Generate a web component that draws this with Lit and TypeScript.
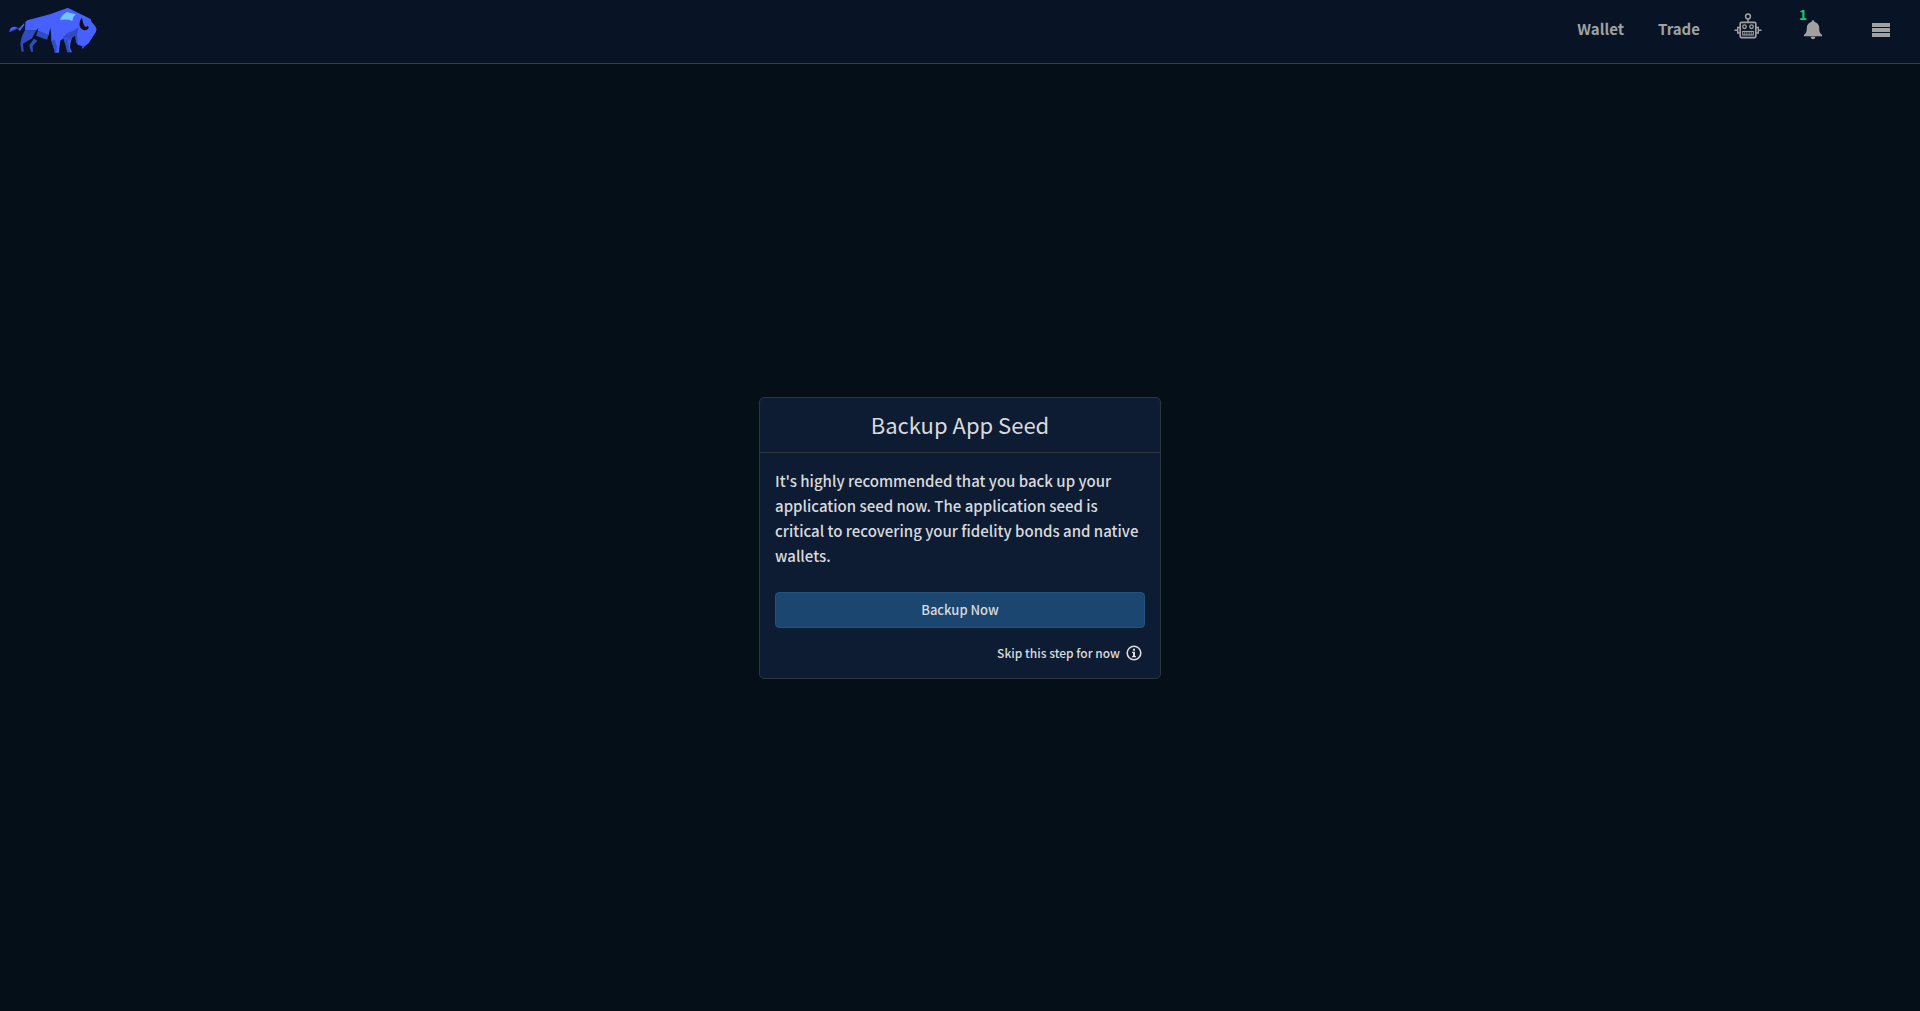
import { LitElement, html, css } from "lit";
import { customElement, property } from "lit/decorators.js";

@customElement("app-header")
export class AppHeader extends LitElement {
  @property({ type: Number }) notes = 1;

  static styles = css`
    :host {
      display: block;
    }
    .bar {
      display: flex;
      align-items: center;
      justify-content: space-between;
      height: 63px;
      border-bottom: 1px solid #393b46;
      background: #081426;
      color: #a1a1a1;
    }
    .logo {
      display: block;
      height: 63px;
    }
    .logo svg {
      display: block;
    }
    nav {
      display: flex;
      align-items: center;
      height: 63px;
      padding-right: 30px;
      padding-bottom: 4px;
      box-sizing: border-box;
    }
    .link {
      color: inherit;
      text-decoration: none;
      font-size: 15px;
      font-weight: 700;
      line-height: 24px;
      padding-bottom: 2px;
      margin-right: 34px;
    }
    .icon {
      position: relative;
      display: block;
      padding: 0;
      border: 0;
      background: none;
      color: inherit;
      font: inherit;
      cursor: pointer;
    }
    .icon svg {
      display: block;
    }
    .robot {
      margin-right: 41px;
      padding-bottom: 8px;
    }
    .bell {
      margin-right: 49px;
    }
    .count {
      position: absolute;
      left: -4px;
      top: -14px;
      color: #1ec471;
      font-size: 14px;
      font-weight: 700;
      line-height: 16px;
    }
  `;

  render() {
    return html`
      <header class="bar">
        <a class="logo" href="#home" aria-label="Home">
          <svg width="110" height="63" viewBox="0 0 330 189" aria-hidden="true">
            <path fill="#4661ff" d="M75 91L76 66L82 61L150 43L196 26Q203 22 211 27L272 57L275 66L286 79Q292 87 288 95L266 130L254 139L248 146L245 138L235 135L228 127L226 106L216 113L211 130L210 143L216 157L202 157L197 135L190 115L181 122L178 145L177 158L165 158L161 143L154 122L153 98L151 83L146 106L113 92L115 84L109 91Z"/>
            <path fill="#4661ff" d="M28 96Q29 80 45 80Q52 81 56 86L72 70L73 75L60 93L51 85Z"/>
            <path fill="#334bc0" d="M28 97Q34 87 52 85L43 91ZM75 90L109 91L96 115L69 131L71 155H65L61 131L66 108ZM114 92L146 104L141 119L108 107ZM102 116L112 122L98 138L99 155H93L88 136ZM154 122L164 119L171 140L169 157H165L161 143ZM190 115L204 118L207 145L211 156H202L197 135Z"/>
            <path fill="#334bc0" d="M189 114Q195 99 219 93L237 81L231 105L234 135L228 127L226 105L215 113L208 123L203 115Z"/>
            <path fill="#73c4ff" d="M200 36L227 43L220 51L217 63Q203 56 180 60Q184 45 200 36Z"/>
            <path fill="#140d18" d="M246 53Q237 63 239 78Q242 88 254 91Q266 90 266 80L262 77L258 82Q249 75 246 53Z"/>
            <path fill="#334bc0" d="M254 137L248 147L245 137Z"/>
          </svg>
        </a>
        <nav>
          <a class="link" href="#wallets">Wallet</a>
          <a class="link" href="#trade">Trade</a>
          <button class="icon robot" aria-label="Market making">
            <svg width="28" height="26" viewBox="0 0 28 26" fill="none" stroke="currentColor" aria-hidden="true">
              <circle cx="14" cy="3.5" r="2.4" stroke-width="1.5"/>
              <path d="M14 6V9.300" stroke-width="1.500"/>
              <rect x="6.200" y="9.300" width="15.600" height="15.400" rx="1.500" stroke-width="1.700"/>
              <path d="M6 14.500H3.700V20H6M22 14.500h2.300V20H22M3.500 17.200H.5M24.500 17.200h3" stroke-width="1.400"/>
              <circle cx="10.500" cy="13.700" r="1.800" stroke-width="1.300"/>
              <circle cx="17.500" cy="13.700" r="1.800" stroke-width="1.300"/>
              <rect x="8.700" y="18.400" width="10.600" height="3.600" stroke-width="1.100"/>
              <path d="M10.800 18v4M12.900 18v4M15.100 18v4M17.200 18v4" stroke-width=".9"/>
            </svg>
          </button>
          <button class="icon bell" aria-label="Notifications">
            <svg width="20" height="20" viewBox="0 0 20 20" fill="currentColor" aria-hidden="true">
              <path d="M10 .3c.9 0 1.300.6 1.400 1.500 3 .8 4.800 3.200 4.800 6.200 0 3.900.8 5.200 2.900 7v1.300H.9V15c2.100-1.800 2.900-3.100 2.900-7 0-3 1.800-5.400 4.800-6.200C8.700.9 9.100.3 10 .3ZM7.600 16.800h4.800a2.400 2.400 0 0 1-4.800 0Z"/>
            </svg>
            <span class="count">${this.notes}</span>
          </button>
          <button class="icon" aria-label="Menu">
            <svg width="18" height="14" viewBox="0 0 18 14" fill="currentColor" aria-hidden="true">
              <path d="M0 0h18v4H0zM0 5h18v4H0zM0 10h18v4H0z"/>
            </svg>
          </button>
        </nav>
      </header>
    `;
  }
}

@customElement("backup-card")
export class BackupCard extends LitElement {
  static styles = css`
    :host {
      display: block;
      width: 402px;
      max-width: 100%;
    }
    .card {
      border: 1px solid #2e3540;
      border-radius: 5px;
      background: #0e1c33;
      color: #d8dadd;
    }
    h1 {
      margin: 0;
      padding: 9px 15px 11px;
      border-bottom: 1px solid #2e3540;
      font-size: 22px;
      font-weight: 400;
      line-height: 34px;
      text-align: center;
    }
    .body {
      padding: 15px;
    }
    p {
      margin: 0 0 24px;
      font-size: 15px;
      font-weight: 500;
      line-height: 25px;
    }
    button {
      cursor: pointer;
      font-family: inherit;
      font-size: 13px;
      font-weight: 500;
      line-height: 20px;
      color: inherit;
    }
    .primary {
      display: block;
      width: 100%;
      padding: 7px;
      border: 1px solid #23527e;
      border-radius: 4px;
      background: #1a466f;
    }
    .skip {
      display: flex;
      align-items: center;
      gap: 6px;
      margin: 15px 3px 0 auto;
      padding: 0;
      border: 0;
      background: none;
      font-size: 12px;
    }
  `;

  render() {
    return html`
      <section class="card">
        <h1>Backup App Seed</h1>
        <div class="body">
          <p>
            It's highly recommended that you back up your application seed now.
            The application seed is critical to recovering your fidelity bonds
            and native wallets.
          </p>
          <button class="primary">Backup Now</button>
          <button class="skip">
            Skip this step for now
            <svg width="16" height="16" viewBox="0 0 16 16" fill="none" stroke="currentColor" aria-hidden="true">
              <circle cx="8" cy="8" r="6.800" stroke-width="1.600"/>
              <path fill="currentColor" stroke="none" d="M7 3.700h2v2H7zM6 6.700h3v4.200h1v1.300H6v-1.300h1V8H6z"/>
            </svg>
          </button>
        </div>
      </section>
    `;
  }
}

@customElement("app-root")
export class AppRoot extends LitElement {
  static styles = css`
    :host {
      display: flex;
      flex-direction: column;
      min-height: 100vh;
      background: #050f17;
      font-family: "Noto Sans CJK SC", "Open Sans", sans-serif;
    }
    main {
      flex: 1;
      display: flex;
      align-items: center;
      justify-content: center;
    }
  `;

  render() {
    return html`
      <app-header></app-header>
      <main><backup-card></backup-card></main>
    `;
  }
}
